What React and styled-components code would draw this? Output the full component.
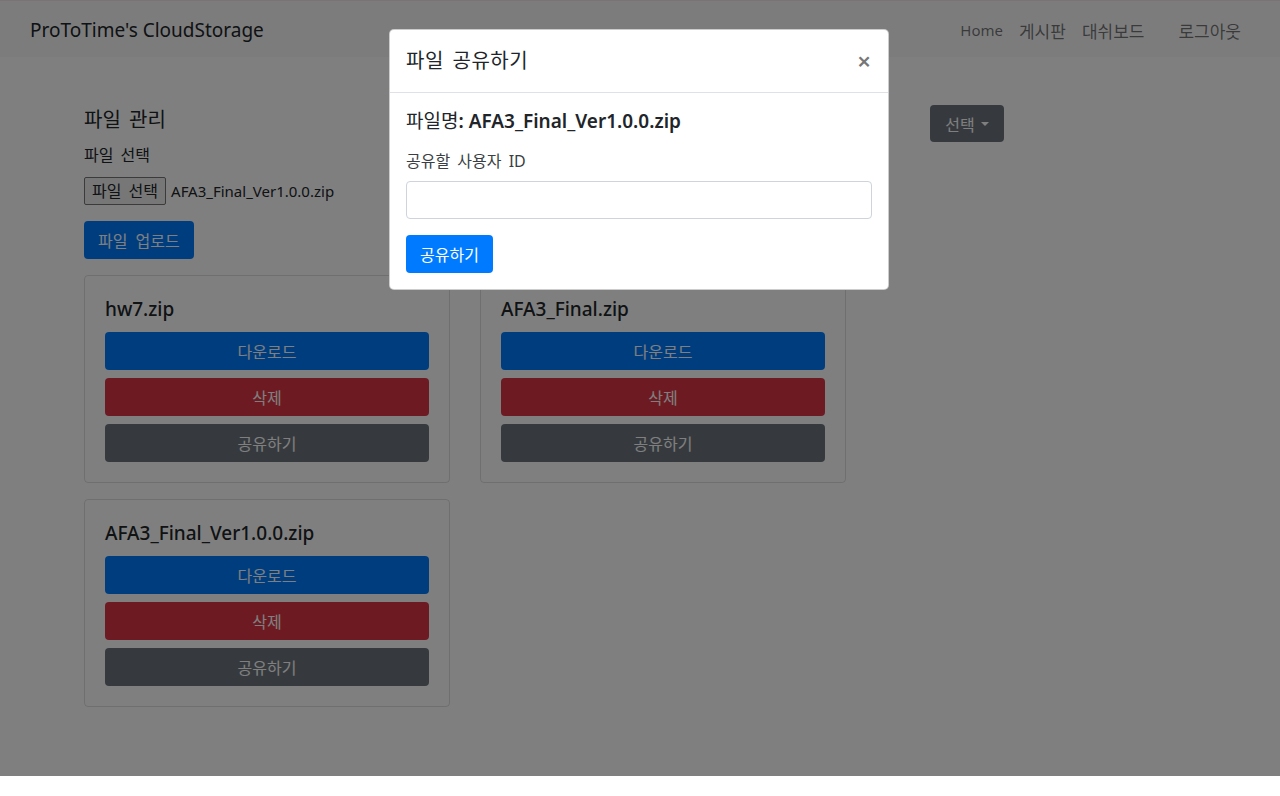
// 클라우드 스토리지 - 파일 공유 모달
import React from "react";
import styled, { createGlobalStyle } from "styled-components";

const files = ["hw7.zip", "AFA3_Final.zip", "AFA3_Final_Ver1.0.0.zip"];

function App() {
  return (
    <Page>
      <GlobalStyle />
      <Navbar>
        <Brand>ProToTime's CloudStorage</Brand>
        <NavLinks>
          <NavLink $en>Home</NavLink>
          <NavLink>게시판</NavLink>
          <NavLink>대쉬보드</NavLink>
          <NavLink $gap>로그아웃</NavLink>
        </NavLinks>
      </Navbar>

      <Main>
        <TopRow>
          <LeftCol>
            <SectionTitle>파일 관리</SectionTitle>
            <Label>파일 선택</Label>
            <FileInput>
              <FileButton>파일 선택</FileButton>
              <FileName>AFA3_Final_Ver1.0.0.zip</FileName>
            </FileInput>
            <Button $variant="primary" $inline>파일 업로드</Button>
          </LeftCol>
          <Dropdown>
            선택 <Caret />
          </Dropdown>
        </TopRow>

        <CardGrid>
          {files.map((f) => (
            <Card key={f}>
              <CardTitle>{f}</CardTitle>
              <Button $variant="primary">다운로드</Button>
              <Button $variant="danger">삭제</Button>
              <Button $variant="secondary">공유하기</Button>
            </Card>
          ))}
        </CardGrid>
      </Main>

      <Backdrop />

      <Modal>
        <ModalHeader>
          <ModalTitle>파일 공유하기</ModalTitle>
          <Close>×</Close>
        </ModalHeader>
        <ModalBody>
          <FileLine>
            <span>파일명</span>
            <b>: AFA3_Final_Ver1.0.0.zip</b>
          </FileLine>
          <ModalLabel>공유할 사용자 ID</ModalLabel>
          <TextInput type="text" />
          <Button $variant="primary" $inline>공유하기</Button>
        </ModalBody>
      </Modal>
    </Page>
  );
}

const GlobalStyle = createGlobalStyle`
  body {
    margin: 0;
    background: #fff;
    font-family: "Noto Sans", "Noto Sans CJK KR", sans-serif;
    color: #212529;
    word-spacing: 3px;
  }
`;

const Page = styled.div`
  position: relative;
  height: 776px;
  border-top: 1px solid #f6e4ea;
  box-sizing: border-box;
  background: #fff;
`;

const Navbar = styled.nav`
  height: 56px;
  box-sizing: border-box;
  background: #f8f9fa;
  display: flex;
  align-items: center;
  justify-content: space-between;
  padding: 2px 31px 0 30px;
`;

const Brand = styled.div`
  font-size: 19px;
  color: #212529;
  word-spacing: 0;
`;

const NavLinks = styled.div`
  display: flex;
  align-items: center;
`;

const NavLink = styled.a`
  font-size: ${(p) => (p.$en ? "15px" : "17px")};
  color: rgba(0, 0, 0, 0.55);
  padding: 0 8px;
  margin-left: ${(p) => (p.$gap ? "18px" : "0")};
`;

const Main = styled.main`
  padding: 48px 0 0 84px;
`;

const TopRow = styled.div`
  display: flex;
  align-items: flex-start;
`;

const LeftCol = styled.div`
  width: 846px;
  display: flex;
  flex-direction: column;
  align-items: flex-start;
`;

const SectionTitle = styled.h5`
  margin: 0 0 8px;
  font-size: 20px;
  font-weight: 400;
  line-height: 30px;
`;

const Label = styled.div`
  font-size: 16px;
  line-height: 24px;
  margin-bottom: 10px;
`;

const FileInput = styled.div`
  display: flex;
  align-items: center;
  height: 28px;
  margin-bottom: 16px;
`;

const FileButton = styled.div`
  height: 28px;
  box-sizing: border-box;
  border: 1px solid #767676;
  border-radius: 2px;
  background: #efefef;
  padding: 0 7px;
  font-size: 16px;
  line-height: 26px;
`;

const FileName = styled.span`
  font-size: 15px;
  word-spacing: 0;
  margin-left: 5px;
`;

const colors = {
  primary: "#007bff",
  danger: "#dc3545",
  secondary: "#6c757d",
};

const Button = styled.button`
  display: block;
  width: ${(p) => (p.$inline ? "auto" : "100%")};
  height: 38px;
  padding: 0 ${(p) => (p.$inline ? "14px" : "12px")};
  border: none;
  border-radius: 4px;
  background: ${(p) => colors[p.$variant]};
  color: #fff;
  font-family: inherit;
  font-size: 16px;
  word-spacing: 4px;
  margin-bottom: ${(p) => (p.$inline ? "0" : "8px")};
  &:last-child {
    margin-bottom: 0;
  }
`;

const Dropdown = styled.div`
  width: 74px;
  height: 37px;
  box-sizing: border-box;
  background: #6c757d;
  border-radius: 4px;
  color: #fff;
  font-size: 16px;
  display: flex;
  align-items: center;
  justify-content: center;
  gap: 6px;
`;

const Caret = styled.span`
  width: 0;
  height: 0;
  border-left: 4px solid transparent;
  border-right: 4px solid transparent;
  border-top: 4px solid #fff;
`;

const CardGrid = styled.div`
  display: grid;
  grid-template-columns: 366px 366px;
  column-gap: 30px;
  row-gap: 16px;
  margin-top: 16px;
`;

const Card = styled.div`
  border: 1px solid rgba(0, 0, 0, 0.125);
  border-radius: 4px;
  padding: 20px;
`;

const CardTitle = styled.h5`
  margin: 0 0 11px;
  padding-top: 1px;
  font-size: 19px;
  font-weight: 500;
  line-height: 24px;
`;

const Backdrop = styled.div`
  position: absolute;
  inset: -1px 0 0 0;
  background: rgba(0, 0, 0, 0.5);
`;

const Modal = styled.div`
  position: absolute;
  top: 28px;
  left: 389px;
  width: 500px;
  box-sizing: border-box;
  background: #fff;
  border: 1px solid rgba(0, 0, 0, 0.2);
  border-radius: 5px;
`;

const ModalHeader = styled.div`
  display: flex;
  align-items: center;
  justify-content: space-between;
  padding: 16px;
  border-bottom: 1px solid #dee2e6;
`;

const ModalTitle = styled.h5`
  margin: 0;
  font-size: 20px;
  font-weight: 400;
  line-height: 30px;
  letter-spacing: 0.5px;
`;

const Close = styled.span`
  font-size: 24px;
  line-height: 1;
  color: #777;
  font-weight: 600;
  margin-right: 1px;
`;

const ModalBody = styled.div`
  padding: 16px;
`;

const FileLine = styled.h5`
  margin: 0 0 16px;
  font-size: 19px;
  line-height: 24px;
  font-weight: 400;
  word-spacing: 0;
  b {
    font-weight: 600;
  }
`;

const ModalLabel = styled.div`
  font-size: 16px;
  line-height: 24px;
  margin-bottom: 8px;
  color: #3a3f44;
`;

const TextInput = styled.input`
  display: block;
  width: 100%;
  height: 38px;
  box-sizing: border-box;
  border: 1px solid #ced4da;
  border-radius: 4px;
  margin-bottom: 16px;
`;

export default App;
